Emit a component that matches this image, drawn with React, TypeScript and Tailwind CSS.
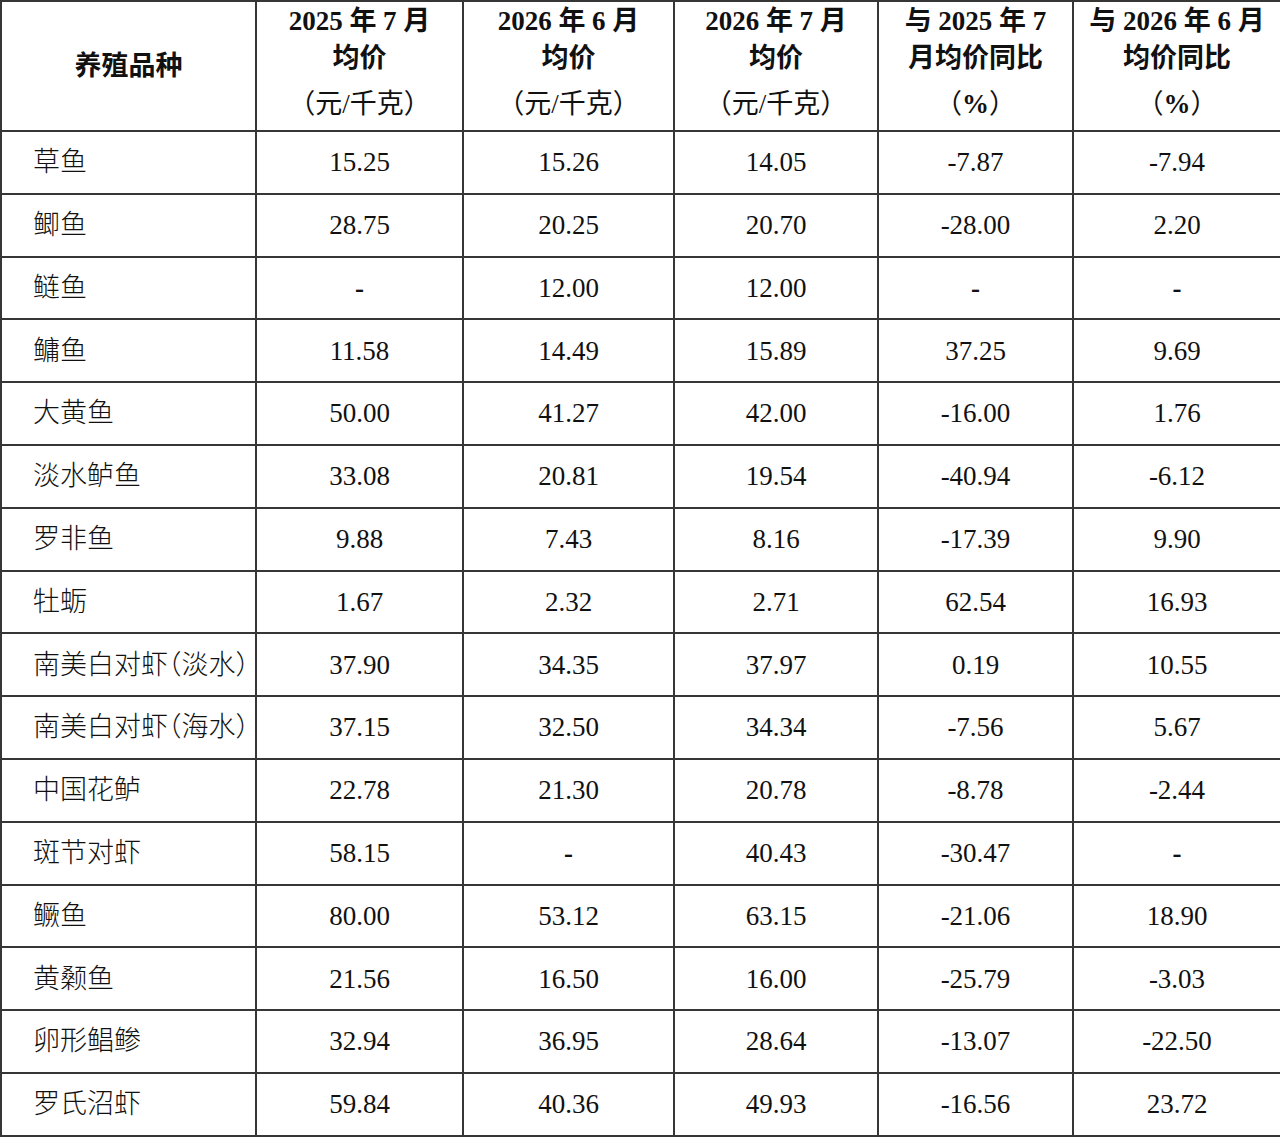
import React from 'react';

type Row = [string, string, string, string, string, string];

const rows: Row[] = [
  ['草鱼', '15.25', '15.26', '14.05', '-7.87', '-7.94'],
  ['鲫鱼', '28.75', '20.25', '20.70', '-28.00', '2.20'],
  ['鲢鱼', '-', '12.00', '12.00', '-', '-'],
  ['鳙鱼', '11.58', '14.49', '15.89', '37.25', '9.69'],
  ['大黄鱼', '50.00', '41.27', '42.00', '-16.00', '1.76'],
  ['淡水鲈鱼', '33.08', '20.81', '19.54', '-40.94', '-6.12'],
  ['罗非鱼', '9.88', '7.43', '8.16', '-17.39', '9.90'],
  ['牡蛎', '1.67', '2.32', '2.71', '62.54', '16.93'],
  ['南美白对虾（淡水）', '37.90', '34.35', '37.97', '0.19', '10.55'],
  ['南美白对虾（海水）', '37.15', '32.50', '34.34', '-7.56', '5.67'],
  ['中国花鲈', '22.78', '21.30', '20.78', '-8.78', '-2.44'],
  ['斑节对虾', '58.15', '-', '40.43', '-30.47', '-'],
  ['鳜鱼', '80.00', '53.12', '63.15', '-21.06', '18.90'],
  ['黄颡鱼', '21.56', '16.50', '16.00', '-25.79', '-3.03'],
  ['卵形鲳鲹', '32.94', '36.95', '28.64', '-13.07', '-22.50'],
  ['罗氏沼虾', '59.84', '40.36', '49.93', '-16.56', '23.72'],
];

const cell = 'border-r-2 border-b-2 border-[#363636]';

const HeaderCell: React.FC<{ l1: string; l2: string; unit: React.ReactNode }> = ({ l1, l2, unit }) => (
  <div className={`${cell} flex flex-col items-center pt-[1px] text-center`}>
    <div className="font-bold leading-[37px]">{l1}</div>
    <div className="font-bold leading-[37px]">{l2}</div>
    <div className="mt-[9px] leading-[37px]">{unit}</div>
  </div>
);

export default function App() {
  return (
    <div
      className="w-[1280px] bg-white text-[27px] text-[#111]"
      style={{ fontFamily: '"Liberation Serif", "Noto Sans CJK SC", serif' }}
    >
      <div className="grid grid-cols-[255px_207px_211px_204px_195px_208px] border-l-2 border-t-2 border-[#363636]">
        <div className={`${cell} flex h-[130px] items-center justify-center font-bold`}>养殖品种</div>
        <HeaderCell l1="2025 年 7 月" l2="均价" unit="（元/千克）" />
        <HeaderCell l1="2026 年 6 月" l2="均价" unit="（元/千克）" />
        <HeaderCell l1="2026 年 7 月" l2="均价" unit="（元/千克）" />
        <HeaderCell l1="与 2025 年 7" l2="月均价同比" unit={<>（<span className="font-bold">%</span>）</>} />
        <HeaderCell l1="与 2026 年 6 月" l2="均价同比" unit={<>（<span className="font-bold">%</span>）</>} />

        {rows.map((r, i) => (
          <React.Fragment key={i}>
            <div
              className={`${cell} flex h-[62.8px] items-center whitespace-nowrap pl-[31px] font-light [font-feature-settings:'halt']`}
            >
              {r[0]}
            </div>
            {r.slice(1).map((v, j) => (
              <div key={j} className={`${cell} flex h-[62.8px] items-center justify-center ${v === '-' ? 'font-bold' : ''}`}>
                {v}
              </div>
            ))}
          </React.Fragment>
        ))}
      </div>
    </div>
  );
}
